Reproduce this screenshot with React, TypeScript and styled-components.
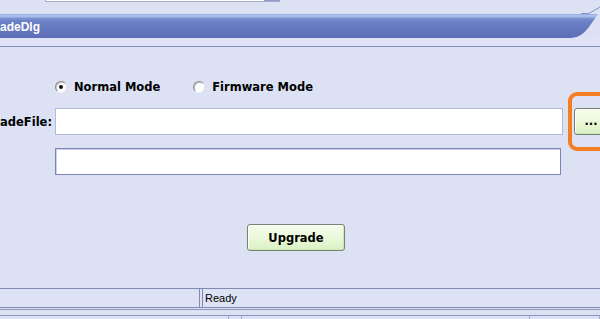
import * as React from 'react'
import styled, { createGlobalStyle } from 'styled-components'

const GlobalStyle = createGlobalStyle`
  html, body {
    margin: 0;
    padding: 0;
    overflow: hidden;
    background: #dce1f3;
  }
`

const Window = styled('div')`
  position: relative;
  display: flex;
  flex-flow: column;
  width: 600px;
  height: 319px;
  overflow: hidden;
  background: #dce1f3;
  font-family: 'DejaVu Sans', Verdana, sans-serif;
  font-size: 11.5px;
  font-weight: bold;
  color: #000;
`

const TopStrip = styled('div')`
  position: relative;
  height: 14px;
  flex: 0 0 auto;
`

const ComboBox = styled('div')`
  display: flex;
  justify-content: flex-end;
  margin-left: 45px;
  width: 233px;
  height: 1px;
  background: #fff;
  border: 1px solid #a5acc9;
  border-top: none;
`

const ComboArrow = styled('div')`
  width: 15px;
  height: 1px;
  background: #8d9cc9;
`

const TailLine = styled('svg')`
  position: absolute;
  right: 0;
  bottom: 0;
`

const TitleBar = styled('div')`
  flex: 0 0 auto;
  height: 24px;
  display: flex;
  align-items: center;
  background: linear-gradient(
    to bottom,
    #8a9fd6 0,
    #aac2ee 1px,
    #a4bcea 3px,
    #7e96d4 4px,
    #6c81c6 7px,
    #6579c0 14px,
    #5c6eb6 24px
  );
  clip-path: path('M0 0 H598 L589 13 Q581 24 571 24 H0 Z');
`

const TitleText = styled('span')`
  font-family: 'Liberation Sans', Arial, sans-serif;
  font-size: 12px;
  font-weight: bold;
  color: #fff;
  padding-top: 2px;
`

const Separator = styled('div')`
  flex: 0 0 auto;
  height: 8px;
  background: #dfe3f5;
  border-bottom: 1px solid #8391bc;
`

const Body = styled('div')`
  flex: 0 0 241px;
  display: flex;
  flex-flow: column;
`

const RadioRow = styled('div')`
  display: flex;
  align-items: center;
  gap: 33px;
  height: 16px;
  margin-top: 32px;
  padding-left: 55px;
`

const RadioItem = styled('label')`
  display: flex;
  align-items: center;
  gap: 7px;
`

const RadioCircle = styled('span')<{ $checked?: boolean }>`
  box-sizing: border-box;
  width: 12px;
  height: 12px;
  border-radius: 50%;
  background: radial-gradient(circle at 60% 60%, #fff 0, #fff 50%, #e8e8e8 100%);
  border: 1px solid;
  border-color: #8a8a8a #e4e4e4 #f4f4f4 #8a8a8a;
  box-shadow: inset 1px 1px 0 #c8c8c8;
  display: flex;
  align-items: center;
  justify-content: center;
  &::after {
    content: '';
    width: 4px;
    height: 4px;
    border-radius: 50%;
    background: ${p => (p.$checked ? '#111' : 'transparent')};
  }
`

const FieldRow = styled('div')<{ $top: number }>`
  display: flex;
  align-items: stretch;
  height: 27px;
  margin-top: ${p => p.$top}px;
`

const Label = styled('div')`
  flex: 0 0 55px;
  box-sizing: border-box;
  padding-right: 3px;
  display: flex;
  align-items: center;
  justify-content: flex-end;
  white-space: nowrap;
`

const TextBox = styled('input')<{ $width: number; $focused?: boolean }>`
  flex: 0 0 auto;
  box-sizing: border-box;
  width: ${p => p.$width}px;
  height: 27px;
  margin: 0;
  padding: 0 4px;
  background: #fff;
  border: 1px solid ${p => (p.$focused ? '#7a86b6' : '#b2bad8')};
  box-shadow: ${p => (p.$focused ? 'inset 1px 1px 0 #c9cfe8' : 'none')};
  outline: none;
  font: inherit;
`

const GreenButton = styled('button')<{ $width: number }>`
  flex: 0 0 auto;
  box-sizing: border-box;
  width: ${p => p.$width}px;
  height: 27px;
  margin: 0;
  padding: 0;
  border: 1px solid #76846f;
  border-radius: 3px;
  background: linear-gradient(to bottom, #f6fdec 0, #eefadf 40%, #daf1c3 100%);
  box-shadow: inset 1px 1px 0 #ffffff, inset -1px -1px 0 #cfe6b6;
  font: inherit;
  color: #000;
`

const BrowseButton = styled(GreenButton)`
  margin-left: 11px;
  padding-bottom: 2px;
`

const ActionRow = styled('div')`
  display: flex;
  margin-top: 49px;
  padding-left: 247px;
`

const StatusBar = styled('div')`
  flex: 0 0 auto;
  display: flex;
  gap: 2px;
  height: 18px;
  border-top: 1px solid #7f8bb1;
  border-bottom: 1px solid #7f8bb1;
  font-family: 'Liberation Sans', Arial, sans-serif;
  font-size: 11px;
  font-weight: normal;
`

const Pane = styled('div')<{ $width?: number }>`
  box-sizing: border-box;
  ${p => (p.$width ? `flex: 0 0 ${p.$width}px;` : 'flex: 1 1 auto;')}
  display: flex;
  align-items: center;
  padding-left: 2px;
  background: #dde2f4;
  border-left: 1px solid ${p => (p.$width ? 'transparent' : '#7f8bb1')};
  border-right: 1px solid ${p => (p.$width ? '#7f8bb1' : 'transparent')};
`

const Taskbar = styled('div')`
  flex: 1 1 auto;
  display: flex;
  flex-flow: column;
  margin-top: 1px;
  border-top: 1px solid #8a96ba;
`

const TaskGap = styled('div')`
  height: 5px;
  border-bottom: 1px solid #8a96ba;
`

const TaskRow = styled('div')`
  flex: 1 1 auto;
  display: flex;
`

const TaskCell = styled('div')<{ $width?: number }>`
  ${p => (p.$width ? `flex: 0 0 ${p.$width}px;` : 'flex: 1 1 auto;')}
  box-sizing: border-box;
  border-right: 1px solid #a3acc8;
`

const Highlight = styled('div')`
  position: absolute;
  left: 568px;
  top: 92px;
  width: 50px;
  height: 59px;
  box-sizing: border-box;
  border: 4px solid #f67e22;
  border-radius: 9px;
`

const Radio: React.FunctionComponent<{ label: string; checked?: boolean }> = props => {
  const { label, checked } = props
  return (
    <RadioItem>
      <RadioCircle $checked={checked} />
      <span>{label}</span>
    </RadioItem>
  )
}

export default function App() {
  return (
    <Window>
      <GlobalStyle />
      <TopStrip>
        <ComboBox>
          <ComboArrow />
        </ComboBox>
        <TailLine width="20" height="8" viewBox="0 0 20 8">
          <path d="M1 7.5 L9 7.5 L20 1" stroke="#7f93c9" strokeWidth="1" fill="none" />
        </TailLine>
      </TopStrip>
      <TitleBar>
        <TitleText>adeDlg</TitleText>
      </TitleBar>
      <Separator />
      <Body>
        <RadioRow>
          <Radio label="Normal Mode" checked />
          <Radio label="Firmware Mode" />
        </RadioRow>
        <FieldRow $top={13}>
          <Label>adeFile:</Label>
          <TextBox $width={508} readOnly />
          <BrowseButton $width={34}>...</BrowseButton>
        </FieldRow>
        <FieldRow $top={13}>
          <Label />
          <TextBox $width={506} $focused readOnly />
        </FieldRow>
        <ActionRow>
          <GreenButton $width={98}>Upgrade</GreenButton>
        </ActionRow>
      </Body>
      <StatusBar>
        <Pane $width={200} />
        <Pane>Ready</Pane>
      </StatusBar>
      <Taskbar>
        <TaskGap />
        <TaskRow>
          <TaskCell $width={229} />
          <TaskCell $width={13} />
          <TaskCell $width={288} />
          <TaskCell />
        </TaskRow>
      </Taskbar>
      <Highlight />
    </Window>
  )
}
